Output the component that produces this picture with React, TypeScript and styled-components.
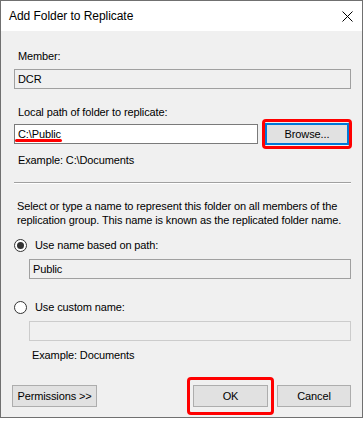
import React from "react";
import styled, { createGlobalStyle } from "styled-components";

const GlobalStyle = createGlobalStyle`
    body {
        margin: 0;
        background: #ffffff;
        font-family: "Liberation Sans", Arial, sans-serif;
        font-size: 11px;
        letter-spacing: -0.12px;
        color: #000000;
    }
`

const Window = styled.div`
    width: 363px;
    height: 418px;
    box-sizing: border-box;
    border: 1px solid #707070;
    display: flex;
    flex-direction: column;
    background: #f0f0f0;
`

const TitleBar = styled.div`
    height: 30px;
    flex-shrink: 0;
    background: #ffffff;
    display: flex;
    align-items: center;
    justify-content: space-between;
    padding: 0 9px 0 8px;
    font-size: 12px;
    letter-spacing: -0.05px;
`

const Body = styled.div`
    flex: 1;
    display: flex;
    flex-direction: column;
    padding: 18px 11px 0 13px;
`

const Label = styled.div<{ $top?: number; $indent?: number }>`
    line-height: 15px;
    padding-left: ${(p) => p.$indent ?? 4}px;
    margin-top: ${(p) => p.$top ?? 0}px;
    white-space: nowrap;
`

const TextBox = styled.div<{ $variant?: "white" | "readonly" | "disabled" }>`
    position: relative;
    height: 20px;
    box-sizing: border-box;
    padding: 0 3px;
    display: flex;
    align-items: center;
    border: 1px solid ${(p) => (p.$variant === "white" ? "#7a7a7a" : p.$variant === "disabled" ? "#cccccc" : "#a0a0a0")};
    background: ${(p) => (p.$variant === "white" ? "#ffffff" : "#f0f0f0")};
    flex: 1;
`

const Row = styled.div<{ $top?: number; $right?: number }>`
    display: flex;
    align-items: center;
    gap: 7px;
    margin-top: ${(p) => p.$top ?? 0}px;
    margin-right: ${(p) => p.$right ?? 0}px;
`

const Button = styled.div<{ $width: number; $focused?: boolean; $highlight?: "tight" | "wide" }>`
    position: relative;
    width: ${(p) => p.$width}px;
    height: 22px;
    box-sizing: border-box;
    flex-shrink: 0;
    display: flex;
    align-items: center;
    justify-content: center;
    background: #e1e1e1;
    border: 1px solid ${(p) => (p.$focused ? "#0078d7" : "#adadad")};
    box-shadow: ${(p) => (p.$focused ? "inset 0 0 0 1px #0078d7" : "none")};

    &::after {
        content: "";
        display: ${(p) => (p.$highlight ? "block" : "none")};
        position: absolute;
        inset: ${(p) => (p.$highlight === "wide" ? "-9px -7px" : "-5px -4px")};
        border: 3px solid #ff0000;
        border-radius: 4px;
    }
`

const Underline = styled.span`
    position: absolute;
    left: 0;
    bottom: 1px;
    width: 47px;
    height: 3px;
    border-radius: 2px;
    background: #ff0000;
`

const Separator = styled.div`
    margin-top: 14px;
    height: 1px;
    background: #a0a0a0;
    border-bottom: 1px solid #ffffff;
`

const Paragraph = styled.div`
    margin-top: 16px;
    padding-left: 3px;
    line-height: 13.5px;
    white-space: nowrap;
`

const RadioRow = styled.div<{ $top: number; $outdent?: boolean }>`
    display: flex;
    align-items: center;
    gap: 8px;
    margin-top: ${(p) => p.$top}px;
    margin-left: ${(p) => (p.$outdent ? -15 : 0)}px;
    line-height: 15px;
`

const RadioCircle = styled.span<{ $checked?: boolean }>`
    width: 13px;
    height: 13px;
    box-sizing: border-box;
    border-radius: 50%;
    border: 1px solid #333333;
    background: #ffffff;
    display: flex;
    align-items: center;
    justify-content: center;

    &::before {
        content: "";
        display: ${(p) => (p.$checked ? "block" : "none")};
        width: 7px;
        height: 7px;
        border-radius: 50%;
        background: #333333;
    }
`

const Indent = styled.div`
    margin-left: 15px;
    display: flex;
    flex-direction: column;
`

const Footer = styled.div`
    margin-top: auto;
    margin-bottom: 10px;
    display: flex;
    align-items: center;
    margin-left: -2px;
`

const Spacer = styled.div`
    flex: 1;
`

const RightButtons = styled.div`
    display: flex;
    gap: 9px;
`

export default function App() {
    return (
        <>
            <GlobalStyle />
            <Window>
                <TitleBar>
                    <span>Add Folder to Replicate</span>
                    <svg width="11" height="11" viewBox="0 0 11 11">
                        <path d="M0.5 0.5 L10.5 10.5 M10.5 0.5 L0.5 10.5" stroke="#000" strokeWidth="1" />
                    </svg>
                </TitleBar>
                <Body>
                    <Label>Member:</Label>
                    <Row $top={5}>
                        <TextBox>DCR</TextBox>
                    </Row>
                    <Label $top={16}>Local path of folder to replicate:</Label>
                    <Row $top={3} $right={2}>
                        <TextBox $variant="white">
                            C:\Public
                            <Underline />
                        </TextBox>
                        <Button $width={84} $focused $highlight="tight">Browse...</Button>
                    </Row>
                    <Label $top={8}>Example: C:\Documents</Label>
                    <Separator />
                    <Paragraph>
                        Select or type a name to represent this folder on all members of the
                        <br />
                        replication group. This name is known as the replicated folder name.
                    </Paragraph>
                    <RadioRow $top={11}>
                        <RadioCircle $checked />
                        <span>Use name based on path:</span>
                    </RadioRow>
                    <Indent>
                        <Row $top={6}>
                            <TextBox>Public</TextBox>
                        </Row>
                        <RadioRow $top={21} $outdent>
                            <RadioCircle />
                            <span>Use custom name:</span>
                        </RadioRow>
                        <Row $top={6}>
                            <TextBox $variant="disabled" />
                        </Row>
                        <Label $top={7} $indent={3}>Example: Documents</Label>
                    </Indent>
                    <Footer>
                        <Button $width={85}>Permissions &gt;&gt;</Button>
                        <Spacer />
                        <RightButtons>
                            <Button $width={75} $highlight="wide">OK</Button>
                            <Button $width={74}>Cancel</Button>
                        </RightButtons>
                    </Footer>
                </Body>
            </Window>
        </>
    );
}
